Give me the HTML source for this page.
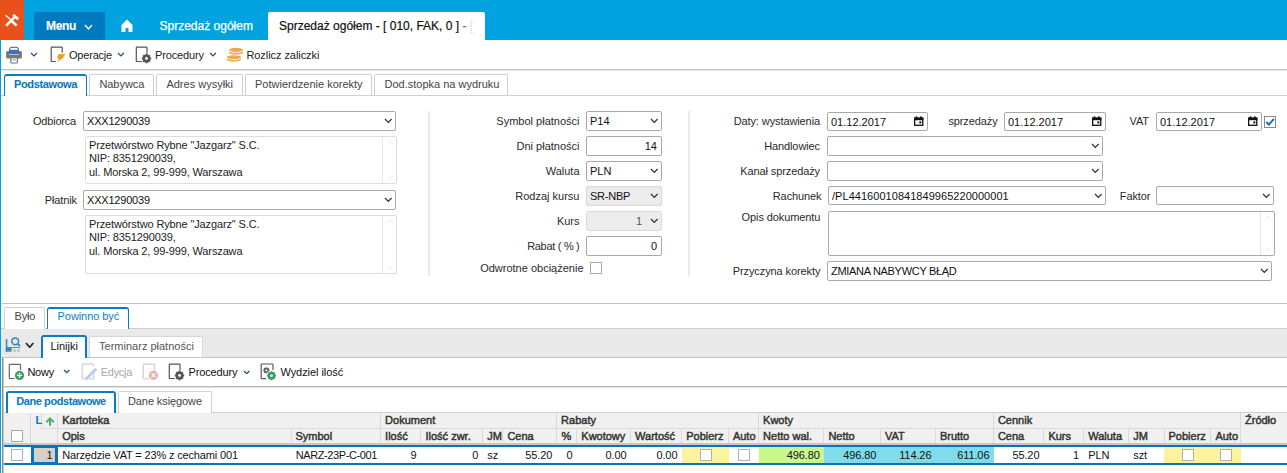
<!DOCTYPE html><html><head><meta charset="utf-8"><style>
html,body{margin:0;padding:0;width:1287px;height:473px;overflow:hidden;background:#fff;font-family:"Liberation Sans",sans-serif;}
body>div,body>svg{position:absolute;box-sizing:border-box;}
.t{white-space:nowrap;}
</style></head><body>

<div style="left:0px;top:0px;width:1287px;height:40px;background:#00a3e0"></div>
<div style="left:0px;top:0px;width:24px;height:40px;background:#e8511b"></div>
<svg style="left:0px;top:0px" width="24" height="40" viewBox="0 0 24 40"><path d="M5.6 15.2 L10.5 19.4" stroke="#fff" stroke-width="1.3"/><path d="M11.8 21 L16.6 25.6" stroke="#fff" stroke-width="2.6"/><path d="M6.2 25.6 L14.6 17.2" stroke="#fff" stroke-width="2.6"/><path d="M12.2 15.6 L14.4 13.9 L19.2 18.3 L17 20.2 Z" fill="#fff"/></svg>
<div style="left:34px;top:12px;width:71px;height:28px;background:#007abe;border-radius:2px 2px 0 0"></div>
<div class="t" style="top:17.84px;font-size:12px;line-height:16px;color:#fff;font-weight:bold;letter-spacing:-0.3px;-webkit-text-stroke:0.1px #fff;left:46px;">Menu</div>
<svg style="left:84px;top:24px" width="9" height="6" viewBox="-1 -1 9 6"><path d="M0 0 L3.5 4 L7 0" fill="none" stroke="#fff" stroke-width="1.3"/></svg>
<svg style="left:121px;top:19px" width="12" height="13" viewBox="0 0 12 13"><path d="M6 0.5 L11.5 6 L11.5 13 L7.5 13 L7.5 9 L4.5 9 L4.5 13 L0.5 13 L0.5 6 Z" fill="#fff"/></svg>
<div class="t" style="top:18.24px;font-size:12px;line-height:16px;color:#fff;-webkit-text-stroke:0.25px #fff;left:159.5px;">Sprzedaż ogółem</div>
<div style="left:268px;top:12px;width:217px;height:28px;background:#fff;border-radius:2px 2px 0 0"></div>
<div class="t" style="top:17.64px;font-size:12px;line-height:16px;color:#111;-webkit-text-stroke:0.2px #111;left:279px;">Sprzedaż ogółem - [ 010, FAK, 0 ] <span style="color:#777;-webkit-text-stroke:0.2px #777">-</span> <span style="color:#ddd;-webkit-text-stroke:0 #ddd">[</span></div>
<div style="left:0px;top:40px;width:1px;height:433px;background:#00a3e0"></div>
<svg style="left:4px;top:44px" width="20" height="20" viewBox="0 0 20 20"><rect x="5.6" y="3.4" width="8.8" height="8" rx="2" fill="#fff" stroke="#777" stroke-width="1.2"/><rect x="2.1" y="7" width="15.8" height="7.5" rx="1.6" fill="#777"/><rect x="5.1" y="5.8" width="9.8" height="4.2" fill="#3f72b8"/><rect x="5.1" y="10" width="9.8" height="1" fill="#b8c8e0"/><rect x="6.8" y="13.6" width="6.6" height="5.4" rx="0.8" fill="#fff" stroke="#777" stroke-width="1.2"/><rect x="8.2" y="15.2" width="3.8" height="1.2" fill="#8cb0dc"/></svg>
<svg style="left:29.7px;top:52.4px" width="7.9" height="4.9" viewBox="-1 -1 7.9 4.9"><path d="M0 0 L2.95 2.9 L5.9 0" fill="none" stroke="#234f8a" stroke-width="1.3"/></svg>
<svg style="left:46px;top:42px" width="22" height="24" viewBox="0 0 22 24"><path d="M16.2 10.7 V5.8 Q16.2 5.2 15.6 5.2 H5.8 Q5.2 5.2 5.2 5.8 V18.9 Q5.2 19.5 5.8 19.5 H9.9" fill="none" stroke="#555" stroke-width="1.2"/><path d="M12.6 12 H19.9 L16.8 14.6 H19 L10.3 20.8 L13.3 16.4 H10.9 Z" fill="#eba024"/></svg>
<div class="t" style="top:47.39px;font-size:11px;line-height:16px;color:#222;letter-spacing:-0.2px;left:69px;">Operacje</div>
<svg style="left:116.7px;top:52.4px" width="7.9" height="4.9" viewBox="-1 -1 7.9 4.9"><path d="M0 0 L2.95 2.9 L5.9 0" fill="none" stroke="#234f8a" stroke-width="1.3"/></svg>
<svg style="left:130px;top:42px" width="24" height="24" viewBox="0 0 24 24"><path d="M17 11.5 V5.8 Q17 5.2 16.4 5.2 H6.9 Q6.3 5.2 6.3 5.8 V18.9 Q6.3 19.5 6.9 19.5 H11.8" fill="none" stroke="#555" stroke-width="1.2"/><polygon points="19.84,15.16 21.18,15.42 21.18,17.58 19.84,17.84 19.81,17.92 20.57,19.04 19.04,20.57 17.92,19.81 17.84,19.84 17.58,21.18 15.42,21.18 15.16,19.84 15.08,19.81 13.96,20.57 12.43,19.04 13.19,17.92 13.16,17.84 11.82,17.58 11.82,15.42 13.16,15.16 13.19,15.08 12.43,13.96 13.96,12.43 15.08,13.19 15.16,13.16 15.42,11.82 17.58,11.82 17.84,13.16 17.92,13.19 19.04,12.43 20.57,13.96 19.81,15.08" fill="#555"/><circle cx="16.5" cy="16.5" r="3.6" fill="#555"/><circle cx="16.5" cy="16.5" r="1.4" fill="#fff"/></svg>
<div class="t" style="top:47.39px;font-size:11px;line-height:16px;color:#222;letter-spacing:-0.13px;left:155px;">Procedury</div>
<svg style="left:209.2px;top:52.4px" width="7.9" height="4.9" viewBox="-1 -1 7.9 4.9"><path d="M0 0 L2.95 2.9 L5.9 0" fill="none" stroke="#234f8a" stroke-width="1.3"/></svg>
<svg style="left:222px;top:42px" width="24" height="24" viewBox="0 0 24 24"><ellipse cx="14.05" cy="7.85" rx="7.1" ry="2.05" fill="#e9a94c"/><path d="M6.95 8.75 A7.1 2.05 0 0 0 21.15 8.75 V10.55 A7.1 2.05 0 0 1 6.95 10.55 Z" fill="#e9a94c"/><ellipse cx="11.95" cy="15.1" rx="7.05" ry="1.9" fill="#e9a94c"/><path d="M4.9 16 A7.05 1.9 0 0 0 19 16 V17.6 A7.05 1.9 0 0 1 4.9 17.6 Z" fill="#e9a94c"/></svg>
<div class="t" style="top:47.39px;font-size:11px;line-height:16px;color:#222;letter-spacing:-0.06px;left:246.4px;">Rozlicz zaliczki</div>
<div style="left:1px;top:69px;width:1286px;height:1px;background:#c4c4c4"></div>
<div style="left:1px;top:70px;width:1286px;height:1px;background:#e8e8e8"></div>
<div style="left:1px;top:95px;width:1286px;height:1px;background:#d0d0d0"></div>
<div style="left:4px;top:74px;width:83px;height:22px;background:#fff;border:1px solid #0a7cc1;border-bottom:none;border-top-width:2px;border-radius:3px 3px 0 0"></div>
<div class="t" style="top:75.99px;font-size:11px;line-height:16px;color:#0a74b8;font-weight:bold;letter-spacing:-0.37px;-webkit-text-stroke:0.05px #0a74b8;left:14px;">Podstawowa</div>
<div style="left:89px;top:74px;width:65px;height:21px;background:#fff;border:1px solid #cfcfcf;border-bottom:none;border-radius:2px 2px 0 0"></div>
<div class="t" style="top:75.99px;font-size:11px;line-height:16px;color:#444;letter-spacing:-0.04px;left:99.4px;">Nabywca</div>
<div style="left:156px;top:74px;width:87px;height:21px;background:#fff;border:1px solid #cfcfcf;border-bottom:none;border-radius:2px 2px 0 0"></div>
<div class="t" style="top:75.99px;font-size:11px;line-height:16px;color:#444;left:166.4px;">Adres wysyłki</div>
<div style="left:245px;top:74px;width:127px;height:21px;background:#fff;border:1px solid #cfcfcf;border-bottom:none;border-radius:2px 2px 0 0"></div>
<div class="t" style="top:75.99px;font-size:11px;line-height:16px;color:#444;left:255px;">Potwierdzenie korekty</div>
<div style="left:374px;top:74px;width:134px;height:21px;background:#fff;border:1px solid #cfcfcf;border-bottom:none;border-radius:2px 2px 0 0"></div>
<div class="t" style="top:75.99px;font-size:11px;line-height:16px;color:#444;left:384.5px;">Dod.stopka na wydruku</div>
<div class="t" style="top:113.19px;font-size:11px;line-height:16px;color:#2a2a2a;letter-spacing:-0.2px;right:1211px;">Odbiorca</div>
<div style="left:83px;top:111px;width:313px;height:20px;background:#fff;border:1px solid #a9a9a9;border-radius:2px"></div>
<div class="t" style="top:113.19px;font-size:11px;line-height:16px;color:#111;letter-spacing:-0.2px;left:87px;">XXX1290039</div>
<svg style="left:384px;top:118.3px" width="8.6" height="5.4" viewBox="-1 -1 8.6 5.4"><path d="M0 0 L3.3 3.4 L6.6 0" fill="none" stroke="#333" stroke-width="1.25"/></svg>
<div style="left:85px;top:136px;width:312px;height:48px;background:#fff;border:1px solid #dcdcdc;border-radius:2px"></div>
<div style="left:382px;top:137px;width:1px;height:46px;background:#e6e6e6"></div>
<svg style="left:386px;top:140px" width="8" height="5" viewBox="0 0 8 5"><path d="M1 4 L4 1 L7 4" fill="none" stroke="#ececec" stroke-width="1"/></svg>
<svg style="left:386px;top:175px" width="8" height="5" viewBox="0 0 8 5"><path d="M1 1 L4 4 L7 1" fill="none" stroke="#ececec" stroke-width="1"/></svg>
<div class="t" style="top:136.79px;font-size:11px;line-height:16px;color:#222;letter-spacing:-0.13px;left:89px;">Przetwórstwo Rybne "Jazgarz" S.C.</div>
<div class="t" style="top:150.29px;font-size:11px;line-height:16px;color:#222;letter-spacing:-0.13px;left:89px;">NIP: 8351290039,</div>
<div class="t" style="top:163.79px;font-size:11px;line-height:16px;color:#222;letter-spacing:-0.13px;left:89px;">ul. Morska 2, 99-999, Warszawa</div>
<div class="t" style="top:192.19px;font-size:11px;line-height:16px;color:#2a2a2a;letter-spacing:-0.1px;right:1210px;">Płatnik</div>
<div style="left:83px;top:190px;width:313px;height:20px;background:#fff;border:1px solid #a9a9a9;border-radius:2px"></div>
<div class="t" style="top:192.19px;font-size:11px;line-height:16px;color:#111;letter-spacing:-0.2px;left:87px;">XXX1290039</div>
<svg style="left:384px;top:197.3px" width="8.6" height="5.4" viewBox="-1 -1 8.6 5.4"><path d="M0 0 L3.3 3.4 L6.6 0" fill="none" stroke="#333" stroke-width="1.25"/></svg>
<div style="left:85px;top:215px;width:312px;height:59px;background:#fff;border:1px solid #dcdcdc;border-radius:2px"></div>
<div style="left:382px;top:216px;width:1px;height:57px;background:#e6e6e6"></div>
<svg style="left:386px;top:219px" width="8" height="5" viewBox="0 0 8 5"><path d="M1 4 L4 1 L7 4" fill="none" stroke="#ececec" stroke-width="1"/></svg>
<svg style="left:386px;top:265px" width="8" height="5" viewBox="0 0 8 5"><path d="M1 1 L4 4 L7 1" fill="none" stroke="#ececec" stroke-width="1"/></svg>
<div class="t" style="top:215.79px;font-size:11px;line-height:16px;color:#222;letter-spacing:-0.13px;left:89px;">Przetwórstwo Rybne "Jazgarz" S.C.</div>
<div class="t" style="top:229.29px;font-size:11px;line-height:16px;color:#222;letter-spacing:-0.13px;left:89px;">NIP: 8351290039,</div>
<div class="t" style="top:242.79px;font-size:11px;line-height:16px;color:#222;letter-spacing:-0.13px;left:89px;">ul. Morska 2, 99-999, Warszawa</div>
<div style="left:428px;top:111px;width:2px;height:165px;background:#e9e9e9"></div>
<div style="left:688px;top:111px;width:2px;height:165px;background:#e9e9e9"></div>
<div class="t" style="top:113.19px;font-size:11px;line-height:16px;color:#2a2a2a;letter-spacing:0px;right:707.5px;">Symbol płatności</div>
<div style="left:586px;top:111px;width:76px;height:20px;background:#fff;border:1px solid #a9a9a9;border-radius:2px"></div>
<div class="t" style="top:113.19px;font-size:11px;line-height:16px;color:#111;left:590px;">P14</div>
<svg style="left:650px;top:118.3px" width="8.6" height="5.4" viewBox="-1 -1 8.6 5.4"><path d="M0 0 L3.3 3.4 L6.6 0" fill="none" stroke="#333" stroke-width="1.25"/></svg>
<div class="t" style="top:138.19px;font-size:11px;line-height:16px;color:#2a2a2a;letter-spacing:0px;right:707.5px;">Dni płatności</div>
<div style="left:586px;top:136px;width:76px;height:20px;background:#fff;border:1px solid #a9a9a9;border-radius:2px"></div>
<div class="t" style="top:138.19px;font-size:11px;line-height:16px;color:#111;right:630px;">14</div>
<div class="t" style="top:163.19px;font-size:11px;line-height:16px;color:#2a2a2a;letter-spacing:0px;right:707.5px;">Waluta</div>
<div style="left:586px;top:161px;width:76px;height:20px;background:#fff;border:1px solid #a9a9a9;border-radius:2px"></div>
<div class="t" style="top:163.19px;font-size:11px;line-height:16px;color:#111;left:590px;">PLN</div>
<svg style="left:650px;top:168.3px" width="8.6" height="5.4" viewBox="-1 -1 8.6 5.4"><path d="M0 0 L3.3 3.4 L6.6 0" fill="none" stroke="#333" stroke-width="1.25"/></svg>
<div class="t" style="top:188.19px;font-size:11px;line-height:16px;color:#2a2a2a;letter-spacing:0px;right:707.5px;">Rodzaj kursu</div>
<div style="left:586px;top:186px;width:76px;height:20px;background:#ececec;border:1px solid #d9d9d9;border-radius:2px"></div>
<div class="t" style="top:188.19px;font-size:11px;line-height:16px;color:#111;letter-spacing:-0.25px;left:590px;">SR-NBP</div>
<svg style="left:650px;top:193.3px" width="8.6" height="5.4" viewBox="-1 -1 8.6 5.4"><path d="M0 0 L3.3 3.4 L6.6 0" fill="none" stroke="#333" stroke-width="1.25"/></svg>
<div class="t" style="top:213.19px;font-size:11px;line-height:16px;color:#2a2a2a;letter-spacing:0px;right:707.5px;">Kurs</div>
<div style="left:586px;top:211px;width:76px;height:20px;background:#ececec;border:1px solid #d9d9d9;border-radius:2px"></div>
<div class="t" style="top:213.19px;font-size:11px;line-height:16px;color:#555;right:645px;">1</div>
<svg style="left:650px;top:218.3px" width="8.6" height="5.4" viewBox="-1 -1 8.6 5.4"><path d="M0 0 L3.3 3.4 L6.6 0" fill="none" stroke="#333" stroke-width="1.25"/></svg>
<div class="t" style="top:238.19px;font-size:11px;line-height:16px;color:#2a2a2a;letter-spacing:-0.3px;right:707.5px;">Rabat ( % )</div>
<div style="left:586px;top:236px;width:76px;height:20px;background:#fff;border:1px solid #a9a9a9;border-radius:2px"></div>
<div class="t" style="top:238.19px;font-size:11px;line-height:16px;color:#111;right:630px;">0</div>
<div class="t" style="top:259.79px;font-size:11px;line-height:16px;color:#2a2a2a;letter-spacing:0px;right:703.5px;">Odwrotne obciążenie</div>
<div style="left:590px;top:262px;width:12px;height:12px;background:#fff;border:1px solid #a8a8a8"></div>
<div class="t" style="top:113.19px;font-size:11px;line-height:16px;color:#2a2a2a;letter-spacing:-0.1px;right:467px;">Daty: wystawienia</div>
<div style="left:827px;top:112px;width:101px;height:19px;background:#fff;border:1px solid #a9a9a9;border-radius:2px"></div>
<div class="t" style="top:114.19px;font-size:11px;line-height:16px;color:#111;left:831px;">01.12.2017</div>
<svg style="left:914.2px;top:116.2px" width="10" height="10" viewBox="0 0 10 10"><rect x="0.65" y="2.2" width="8.1" height="7.1" fill="none" stroke="#111" stroke-width="1.3"/><rect x="0" y="1.6" width="9.4" height="2.6" fill="#111"/><rect x="1.7" y="0.4" width="1.6" height="2" fill="#111"/><rect x="6.1" y="0.4" width="1.6" height="2" fill="#111"/><rect x="5.3" y="5.4" width="2" height="2" fill="#111"/></svg>
<div class="t" style="top:113.19px;font-size:11px;line-height:16px;color:#2a2a2a;letter-spacing:-0.1px;right:289.4px;">sprzedaży</div>
<div style="left:1004px;top:112px;width:102px;height:19px;background:#fff;border:1px solid #a9a9a9;border-radius:2px"></div>
<div class="t" style="top:114.19px;font-size:11px;line-height:16px;color:#111;left:1008px;">01.12.2017</div>
<svg style="left:1092.2px;top:116.2px" width="10" height="10" viewBox="0 0 10 10"><rect x="0.65" y="2.2" width="8.1" height="7.1" fill="none" stroke="#111" stroke-width="1.3"/><rect x="0" y="1.6" width="9.4" height="2.6" fill="#111"/><rect x="1.7" y="0.4" width="1.6" height="2" fill="#111"/><rect x="6.1" y="0.4" width="1.6" height="2" fill="#111"/><rect x="5.3" y="5.4" width="2" height="2" fill="#111"/></svg>
<div class="t" style="top:113.19px;font-size:11px;line-height:16px;color:#2a2a2a;letter-spacing:-0.1px;right:138px;">VAT</div>
<div style="left:1156px;top:112px;width:106px;height:19px;background:#fff;border:1px solid #a9a9a9;border-radius:2px"></div>
<div class="t" style="top:114.19px;font-size:11px;line-height:16px;color:#111;left:1160px;">01.12.2017</div>
<svg style="left:1248.2px;top:116.2px" width="10" height="10" viewBox="0 0 10 10"><rect x="0.65" y="2.2" width="8.1" height="7.1" fill="none" stroke="#111" stroke-width="1.3"/><rect x="0" y="1.6" width="9.4" height="2.6" fill="#111"/><rect x="1.7" y="0.4" width="1.6" height="2" fill="#111"/><rect x="6.1" y="0.4" width="1.6" height="2" fill="#111"/><rect x="5.3" y="5.4" width="2" height="2" fill="#111"/></svg>
<div style="left:1264px;top:116px;width:12px;height:12px;background:#fff;border:1px solid #888"></div>
<svg style="left:1265px;top:117px" width="10" height="10" viewBox="0 0 10 10"><path d="M1.3 5 L3.9 7.6 L8.9 1.8" fill="none" stroke="#1e5fa8" stroke-width="1.8"/></svg>
<div class="t" style="top:138.19px;font-size:11px;line-height:16px;color:#2a2a2a;letter-spacing:-0.1px;right:467px;">Handlowiec</div>
<div style="left:827px;top:136px;width:276px;height:20px;background:#fff;border:1px solid #a9a9a9;border-radius:2px"></div>
<svg style="left:1091px;top:143.3px" width="8.6" height="5.4" viewBox="-1 -1 8.6 5.4"><path d="M0 0 L3.3 3.4 L6.6 0" fill="none" stroke="#333" stroke-width="1.25"/></svg>
<div class="t" style="top:163.19px;font-size:11px;line-height:16px;color:#2a2a2a;letter-spacing:-0.1px;right:467px;">Kanał sprzedaży</div>
<div style="left:827px;top:161px;width:276px;height:20px;background:#fff;border:1px solid #a9a9a9;border-radius:2px"></div>
<svg style="left:1091px;top:168.3px" width="8.6" height="5.4" viewBox="-1 -1 8.6 5.4"><path d="M0 0 L3.3 3.4 L6.6 0" fill="none" stroke="#333" stroke-width="1.25"/></svg>
<div class="t" style="top:188.19px;font-size:11px;line-height:16px;color:#2a2a2a;letter-spacing:-0.1px;right:465.5px;">Rachunek</div>
<div style="left:828px;top:186px;width:278px;height:19px;background:#fff;border:1px solid #a9a9a9;border-radius:2px"></div>
<div class="t" style="top:188.19px;font-size:11px;line-height:16px;color:#111;letter-spacing:0.04px;left:832px;">/PL44160010841849965220000001</div>
<svg style="left:1094px;top:193.3px" width="8.6" height="5.4" viewBox="-1 -1 8.6 5.4"><path d="M0 0 L3.3 3.4 L6.6 0" fill="none" stroke="#333" stroke-width="1.25"/></svg>
<div class="t" style="top:188.19px;font-size:11px;line-height:16px;color:#2a2a2a;letter-spacing:-0.1px;right:136.5999999999999px;">Faktor</div>
<div style="left:1156px;top:186px;width:118px;height:19px;background:#fff;border:1px solid #a9a9a9;border-radius:2px"></div>
<svg style="left:1262px;top:193.3px" width="8.6" height="5.4" viewBox="-1 -1 8.6 5.4"><path d="M0 0 L3.3 3.4 L6.6 0" fill="none" stroke="#333" stroke-width="1.25"/></svg>
<div class="t" style="top:209.19px;font-size:11px;line-height:16px;color:#2a2a2a;letter-spacing:-0.1px;right:466.70000000000005px;">Opis dokumentu</div>
<div style="left:828px;top:211px;width:447px;height:45px;background:#fff;border:1px solid #a9a9a9;border-radius:2px"></div>
<div style="left:1260px;top:212px;width:1px;height:43px;background:#e6e6e6"></div>
<svg style="left:1264px;top:215px" width="8" height="5" viewBox="0 0 8 5"><path d="M1 4 L4 1 L7 4" fill="none" stroke="#ececec" stroke-width="1"/></svg>
<svg style="left:1264px;top:247px" width="8" height="5" viewBox="0 0 8 5"><path d="M1 1 L4 4 L7 1" fill="none" stroke="#ececec" stroke-width="1"/></svg>
<div class="t" style="top:263.19px;font-size:11px;line-height:16px;color:#2a2a2a;letter-spacing:-0.1px;right:466.70000000000005px;">Przyczyna korekty</div>
<div style="left:827px;top:261px;width:445px;height:20px;background:#fff;border:1px solid #a9a9a9;border-radius:2px"></div>
<div class="t" style="top:263.19px;font-size:11px;line-height:16px;color:#111;letter-spacing:-0.3px;left:831px;">ZMIANA NABYWCY BŁĄD</div>
<svg style="left:1260px;top:268.3px" width="8.6" height="5.4" viewBox="-1 -1 8.6 5.4"><path d="M0 0 L3.3 3.4 L6.6 0" fill="none" stroke="#333" stroke-width="1.25"/></svg>
<div style="left:2px;top:303px;width:1285px;height:1px;background:#c2c2c2"></div>
<div style="left:1px;top:328px;width:1286px;height:1px;background:#cfcfcf"></div>
<div style="left:4px;top:307px;width:41px;height:22px;background:#fff;border:1px solid #cfcfcf;border-bottom:none;border-radius:2px 2px 0 0"></div>
<div class="t" style="top:307.99px;font-size:11px;line-height:16px;color:#444;letter-spacing:-0.2px;left:14.5px;">Było</div>
<div style="left:47px;top:307px;width:82px;height:23px;background:#fff;border:1px solid #0a7cc1;border-bottom:none;border-top-width:2px;border-radius:3px 3px 0 0"></div>
<div class="t" style="top:307.99px;font-size:11px;line-height:16px;color:#0a7cc1;letter-spacing:-0.08px;left:57.6px;">Powinno być</div>
<div style="left:1px;top:329px;width:1286px;height:28px;background:#e9e9e9"></div>
<div style="left:2px;top:357px;width:1px;height:116px;background:#8f8f8f"></div>
<div style="left:3px;top:357px;width:1px;height:116px;background:#c4c4c4"></div>
<div style="left:1px;top:357px;width:1286px;height:1px;background:#c4c4c4"></div>
<svg style="left:0px;top:330px" width="24" height="26" viewBox="0 330 24 26"><rect x="5.8" y="339" width="1.5" height="12.6" fill="#3d7fc9"/><rect x="5.8" y="348" width="5.8" height="3.6" fill="#3d7fc9"/><rect x="7" y="347" width="13" height="0.9" fill="#3d7fc9"/><circle cx="15.2" cy="341.3" r="3.4" fill="none" stroke="#3d7fc9" stroke-width="1.5"/><path d="M17.5 343.6 L20 346.1" stroke="#3d7fc9" stroke-width="1.9"/><rect x="13.2" y="349.3" width="2.7" height="2.5" fill="#c4c4c4"/><rect x="17" y="349.3" width="2.9" height="2.5" fill="#c4c4c4"/></svg>
<svg style="left:25.3px;top:342.2px" width="9.4" height="6.2" viewBox="-1 -1 9.4 6.2"><path d="M0 0 L3.7 4.2 L7.4 0" fill="none" stroke="#222" stroke-width="1.7"/></svg>
<div style="left:41px;top:335px;width:46px;height:23px;background:#fff;border:2px solid #0a7cc1;border-bottom:none;border-radius:3px 3px 0 0"></div>
<div class="t" style="top:338.19px;font-size:11px;line-height:16px;color:#111;left:50.4px;">Linijki</div>
<div style="left:89px;top:335.5px;width:114px;height:21.5px;background:#fff;border:1px solid #d8d8d8;border-bottom:none;border-radius:2px 2px 0 0"></div>
<div class="t" style="top:338.19px;font-size:11px;line-height:16px;color:#555;left:99.1px;">Terminarz płatności</div>
<svg style="left:0px;top:355px" width="40" height="32" viewBox="0 355 40 32"><path d="M20.5 369.9 V364.90000000000003 Q20.5 364.3 19.9 364.3 H9.9 Q9.3 364.3 9.3 364.90000000000003 V377.9 Q9.3 378.5 9.9 378.5 H14.7" fill="none" stroke="#666" stroke-width="1.2"/><circle cx="19.5" cy="375.4" r="4.6" fill="#3f9c6a"/><path d="M19.5 372.8 V378 M16.9 375.4 H22.1" stroke="#fff" stroke-width="1.4"/></svg>
<div class="t" style="top:364.09px;font-size:11px;line-height:16px;color:#111;letter-spacing:-0.22px;left:27.4px;">Nowy</div>
<svg style="left:62.5px;top:369.4px" width="7.4" height="4.7" viewBox="-1 -1 7.4 4.7"><path d="M0 0 L2.7 2.7 L5.4 0" fill="none" stroke="#234f8a" stroke-width="1.3"/></svg>
<svg style="left:78px;top:355px" width="24" height="32" viewBox="78 355 24 32"><path d="M93.7 366.5 V364.8 Q93.7 364.2 93.10000000000001 364.2 H82.8 Q82.2 364.2 82.2 364.8 V378.29999999999995 Q82.2 378.9 82.8 378.9 H84.5" fill="none" stroke="#cfcfcf" stroke-width="1.2"/><path d="M93.7 372 V378.9 H89" fill="none" stroke="#cfcfcf" stroke-width="1.2"/><path d="M85.6 379.5 L96.3 368.8" stroke="#b9cde6" stroke-width="3"/></svg>
<div class="t" style="top:364.09px;font-size:11px;line-height:16px;color:#a8a8a8;letter-spacing:-0.3px;left:100.8px;">Edycja</div>
<svg style="left:138px;top:355px" width="24" height="32" viewBox="138 355 24 32"><path d="M154.7 370.8 V364.8 Q154.7 364.2 154.1 364.2 H143.9 Q143.3 364.2 143.3 364.8 V378.29999999999995 Q143.3 378.9 143.9 378.9 H148.8" fill="none" stroke="#d0d0d0" stroke-width="1.2"/><circle cx="153.4" cy="375.3" r="4.6" fill="#ebb5ab"/><path d="M151.6 373.5 L155.2 377.1 M155.2 373.5 L151.6 377.1" stroke="#fff" stroke-width="1.2"/></svg>
<svg style="left:163px;top:358.5px" width="24" height="24" viewBox="0 0 24 24"><path d="M17 11.5 V5.8 Q17 5.2 16.4 5.2 H6.9 Q6.3 5.2 6.3 5.8 V18.9 Q6.3 19.5 6.9 19.5 H11.8" fill="none" stroke="#555" stroke-width="1.2"/><polygon points="19.84,15.16 21.18,15.42 21.18,17.58 19.84,17.84 19.81,17.92 20.57,19.04 19.04,20.57 17.92,19.81 17.84,19.84 17.58,21.18 15.42,21.18 15.16,19.84 15.08,19.81 13.96,20.57 12.43,19.04 13.19,17.92 13.16,17.84 11.82,17.58 11.82,15.42 13.16,15.16 13.19,15.08 12.43,13.96 13.96,12.43 15.08,13.19 15.16,13.16 15.42,11.82 17.58,11.82 17.84,13.16 17.92,13.19 19.04,12.43 20.57,13.96 19.81,15.08" fill="#555"/><circle cx="16.5" cy="16.5" r="3.6" fill="#555"/><circle cx="16.5" cy="16.5" r="1.4" fill="#fff"/></svg>
<div class="t" style="top:363.89px;font-size:11px;line-height:16px;color:#111;letter-spacing:-0.13px;left:188.5px;">Procedury</div>
<svg style="left:243px;top:369.6px" width="7.4" height="4.7" viewBox="-1 -1 7.4 4.7"><path d="M0 0 L2.7 2.7 L5.4 0" fill="none" stroke="#234f8a" stroke-width="1.3"/></svg>
<svg style="left:256px;top:355px" width="24" height="32" viewBox="256 355 24 32"><path d="M273 370 V364.6 Q273 364 272.4 364 H261.8 Q261.2 364 261.2 364.6 V378.09999999999997 Q261.2 378.7 261.8 378.7 H266" fill="none" stroke="#555" stroke-width="1.2"/><circle cx="271.5" cy="375.7" r="5.6" fill="#fff"/><polygon points="268.63,369.51 269.61,369.65 269.61,371.15 268.63,371.29 268.61,371.35 269.20,372.15 268.15,373.20 267.35,372.61 267.29,372.63 267.15,373.61 265.65,373.61 265.51,372.63 265.45,372.61 264.65,373.20 263.60,372.15 264.19,371.35 264.17,371.29 263.19,371.15 263.19,369.65 264.17,369.51 264.19,369.45 263.60,368.65 264.65,367.60 265.45,368.19 265.51,368.17 265.65,367.19 267.15,367.19 267.29,368.17 267.35,368.19 268.15,367.60 269.20,368.65 268.61,369.45" fill="#666"/><circle cx="266.4" cy="370.4" r="2.4" fill="#666"/><circle cx="266.4" cy="370.4" r="0.9" fill="#fff"/><circle cx="271.5" cy="375.7" r="5.3" fill="#fff"/><polygon points="274.66,374.44 275.98,374.66 275.98,376.74 274.66,376.96 274.62,377.04 275.40,378.13 273.93,379.60 272.84,378.82 272.76,378.86 272.54,380.18 270.46,380.18 270.24,378.86 270.16,378.82 269.07,379.60 267.60,378.13 268.38,377.04 268.34,376.96 267.02,376.74 267.02,374.66 268.34,374.44 268.38,374.36 267.60,373.27 269.07,371.80 270.16,372.58 270.24,372.54 270.46,371.22 272.54,371.22 272.76,372.54 272.84,372.58 273.93,371.80 275.40,373.27 274.62,374.36" fill="#3f9c6a"/><circle cx="271.5" cy="375.7" r="3.4" fill="#3f9c6a"/><circle cx="271.5" cy="375.7" r="1.3" fill="#fff"/></svg>
<div class="t" style="top:363.89px;font-size:11px;line-height:16px;color:#111;letter-spacing:-0.05px;left:280.4px;">Wydziel ilość</div>
<div style="left:4px;top:386px;width:1283px;height:1px;background:#b9b9b9"></div>
<div style="left:4px;top:387px;width:1283px;height:1px;background:#e2e2e2"></div>
<div style="left:4px;top:412px;width:1283px;height:1px;background:#d0d0d0"></div>
<div style="left:6px;top:391px;width:110px;height:22px;background:#fff;border:2px solid #0a7cc1;border-bottom:none;border-radius:3px 3px 0 0"></div>
<div class="t" style="top:392.69px;font-size:11px;line-height:16px;color:#0b78bd;font-weight:bold;letter-spacing:-0.43px;-webkit-text-stroke:0.05px #0b78bd;left:16.3px;">Dane podstawowe</div>
<div style="left:118px;top:391px;width:94px;height:22px;background:#fff;border:1px solid #d0d0d0;border-bottom:none;border-radius:2px 2px 0 0"></div>
<div class="t" style="top:393.19px;font-size:11px;line-height:16px;color:#444;letter-spacing:-0.1px;left:128px;">Dane księgowe</div>
<div style="left:4px;top:413px;width:1283px;height:30px;background:#f0f0f0"></div>
<div style="left:4px;top:443px;width:1283px;height:2px;background:#c8c8c8"></div>
<div style="left:30px;top:413px;width:1px;height:30px;background:#d9d9d9"></div>
<div style="left:57px;top:413px;width:1px;height:30px;background:#d9d9d9"></div>
<div style="left:380px;top:413px;width:1px;height:30px;background:#d9d9d9"></div>
<div style="left:556px;top:413px;width:1px;height:30px;background:#d9d9d9"></div>
<div style="left:758px;top:413px;width:1px;height:30px;background:#d9d9d9"></div>
<div style="left:993px;top:413px;width:1px;height:30px;background:#d9d9d9"></div>
<div style="left:1240px;top:413px;width:1px;height:30px;background:#d9d9d9"></div>
<div style="left:291px;top:428px;width:1px;height:15px;background:#d9d9d9"></div>
<div style="left:420px;top:428px;width:1px;height:15px;background:#d9d9d9"></div>
<div style="left:482px;top:428px;width:1px;height:15px;background:#d9d9d9"></div>
<div style="left:502px;top:428px;width:1px;height:15px;background:#d9d9d9"></div>
<div style="left:576px;top:428px;width:1px;height:15px;background:#d9d9d9"></div>
<div style="left:630px;top:428px;width:1px;height:15px;background:#d9d9d9"></div>
<div style="left:681px;top:428px;width:1px;height:15px;background:#d9d9d9"></div>
<div style="left:728px;top:428px;width:1px;height:15px;background:#d9d9d9"></div>
<div style="left:823px;top:428px;width:1px;height:15px;background:#d9d9d9"></div>
<div style="left:880px;top:428px;width:1px;height:15px;background:#d9d9d9"></div>
<div style="left:935px;top:428px;width:1px;height:15px;background:#d9d9d9"></div>
<div style="left:1043px;top:428px;width:1px;height:15px;background:#d9d9d9"></div>
<div style="left:1083px;top:428px;width:1px;height:15px;background:#d9d9d9"></div>
<div style="left:1128px;top:428px;width:1px;height:15px;background:#d9d9d9"></div>
<div style="left:1164px;top:428px;width:1px;height:15px;background:#d9d9d9"></div>
<div style="left:1210px;top:428px;width:1px;height:15px;background:#d9d9d9"></div>
<div style="left:41px;top:413px;width:1px;height:16px;background:#d9d9d9"></div>
<div style="left:41px;top:428px;width:1200px;height:1px;background:#d9d9d9"></div>
<div class="t" style="top:411.69px;font-size:11px;line-height:16px;color:#0a7cc1;font-weight:bold;-webkit-text-stroke:0.1px #0a7cc1;left:35.4px;">L</div>
<svg style="left:45px;top:417px" width="10" height="9" viewBox="0 0 10 9"><path d="M5 8.8 V1.8 M1.3 5.2 L5 1.5 L8.7 5.2" fill="none" stroke="#4caf6a" stroke-width="2"/></svg>
<div style="left:11px;top:430px;width:12px;height:12px;background:#fff;border:1px solid #a8a8a8"></div>
<div class="t" style="top:411.69px;font-size:11px;line-height:16px;color:#333;letter-spacing:0px;-webkit-text-stroke:0.45px #333;left:62.2px;">Kartoteka</div>
<div class="t" style="top:411.69px;font-size:11px;line-height:16px;color:#333;letter-spacing:0px;-webkit-text-stroke:0.45px #333;left:385.1px;">Dokument</div>
<div class="t" style="top:411.69px;font-size:11px;line-height:16px;color:#333;letter-spacing:0px;-webkit-text-stroke:0.45px #333;left:561.1px;">Rabaty</div>
<div class="t" style="top:411.69px;font-size:11px;line-height:16px;color:#333;letter-spacing:0px;-webkit-text-stroke:0.45px #333;left:763.1px;">Kwoty</div>
<div class="t" style="top:411.69px;font-size:11px;line-height:16px;color:#333;letter-spacing:0px;-webkit-text-stroke:0.45px #333;left:997.9px;">Cennik</div>
<div class="t" style="top:411.69px;font-size:11px;line-height:16px;color:#333;letter-spacing:0px;-webkit-text-stroke:0.45px #333;left:1245px;">Źródło</div>
<div class="t" style="top:427.69px;font-size:11px;line-height:16px;color:#333;letter-spacing:0px;-webkit-text-stroke:0.45px #333;left:62.2px;">Opis</div>
<div class="t" style="top:427.69px;font-size:11px;line-height:16px;color:#333;letter-spacing:0px;-webkit-text-stroke:0.45px #333;left:295.4px;">Symbol</div>
<div class="t" style="top:427.69px;font-size:11px;line-height:16px;color:#333;letter-spacing:0px;-webkit-text-stroke:0.45px #333;left:385.1px;">Ilość</div>
<div class="t" style="top:427.69px;font-size:11px;line-height:16px;color:#333;letter-spacing:0px;-webkit-text-stroke:0.45px #333;left:425.5px;">Ilość zwr.</div>
<div class="t" style="top:427.69px;font-size:11px;line-height:16px;color:#333;letter-spacing:0px;-webkit-text-stroke:0.45px #333;left:487.2px;">JM</div>
<div class="t" style="top:427.69px;font-size:11px;line-height:16px;color:#333;letter-spacing:0px;-webkit-text-stroke:0.45px #333;left:507.4px;">Cena</div>
<div class="t" style="top:427.69px;font-size:11px;line-height:16px;color:#333;letter-spacing:0px;-webkit-text-stroke:0.45px #333;left:561.5px;">%</div>
<div class="t" style="top:427.69px;font-size:11px;line-height:16px;color:#333;letter-spacing:0px;-webkit-text-stroke:0.45px #333;left:581.3px;">Kwotowy</div>
<div class="t" style="top:427.69px;font-size:11px;line-height:16px;color:#333;letter-spacing:0px;-webkit-text-stroke:0.45px #333;left:635.1px;">Wartość</div>
<div class="t" style="top:427.69px;font-size:11px;line-height:16px;color:#333;letter-spacing:0px;-webkit-text-stroke:0.45px #333;left:686.2px;">Pobierz</div>
<div class="t" style="top:427.69px;font-size:11px;line-height:16px;color:#333;letter-spacing:0px;-webkit-text-stroke:0.45px #333;left:732.9px;">Auto</div>
<div class="t" style="top:427.69px;font-size:11px;line-height:16px;color:#333;letter-spacing:0px;-webkit-text-stroke:0.45px #333;left:763.1px;">Netto wal.</div>
<div class="t" style="top:427.69px;font-size:11px;line-height:16px;color:#333;letter-spacing:0px;-webkit-text-stroke:0.45px #333;left:828.4px;">Netto</div>
<div class="t" style="top:427.69px;font-size:11px;line-height:16px;color:#333;letter-spacing:0px;-webkit-text-stroke:0.45px #333;left:885px;">VAT</div>
<div class="t" style="top:427.69px;font-size:11px;line-height:16px;color:#333;letter-spacing:0px;-webkit-text-stroke:0.45px #333;left:939.9px;">Brutto</div>
<div class="t" style="top:427.69px;font-size:11px;line-height:16px;color:#333;letter-spacing:0px;-webkit-text-stroke:0.45px #333;left:997.9px;">Cena</div>
<div class="t" style="top:427.69px;font-size:11px;line-height:16px;color:#333;letter-spacing:0px;-webkit-text-stroke:0.45px #333;left:1048.4px;">Kurs</div>
<div class="t" style="top:427.69px;font-size:11px;line-height:16px;color:#333;letter-spacing:0px;-webkit-text-stroke:0.45px #333;left:1088.2px;">Waluta</div>
<div class="t" style="top:427.69px;font-size:11px;line-height:16px;color:#333;letter-spacing:0px;-webkit-text-stroke:0.45px #333;left:1133.3px;">JM</div>
<div class="t" style="top:427.69px;font-size:11px;line-height:16px;color:#333;letter-spacing:0px;-webkit-text-stroke:0.45px #333;left:1168.5px;">Pobierz</div>
<div class="t" style="top:427.69px;font-size:11px;line-height:16px;color:#333;letter-spacing:0px;-webkit-text-stroke:0.45px #333;left:1215.4px;">Auto</div>
<div style="left:4px;top:445px;width:1283px;height:2px;background:#0a74b8"></div>
<div style="left:4px;top:463px;width:1283px;height:2px;background:#0a74b8"></div>
<div style="left:682px;top:447px;width:47px;height:16px;background:#fff29e"></div>
<div style="left:1164px;top:447px;width:77px;height:16px;background:#fff29e"></div>
<div style="left:759px;top:447px;width:65px;height:16px;background:#c9f78c"></div>
<div style="left:824px;top:447px;width:170px;height:16px;background:#80dcea"></div>
<div style="left:31px;top:447px;width:27px;height:16px;background:#0a74b8"></div>
<div style="left:34px;top:448px;width:21px;height:14px;background:#d6d0c8"></div>
<div style="left:11px;top:449px;width:12px;height:12px;background:#fff;border:1px solid #b0b0b0"></div>
<div style="left:700px;top:449px;width:12px;height:12px;background:#fff;border:1px solid #b0b0b0"></div>
<div style="left:738px;top:449px;width:12px;height:12px;background:#fff;border:1px solid #b0b0b0"></div>
<div style="left:1182px;top:449px;width:12px;height:12px;background:#fff;border:1px solid #b0b0b0"></div>
<div style="left:1220px;top:449px;width:12px;height:12px;background:#fff;border:1px solid #b0b0b0"></div>
<div class="t" style="top:446.69px;font-size:11px;line-height:16px;color:#111;letter-spacing:-0.1px;right:1234.5px;">1</div>
<div class="t" style="top:446.69px;font-size:11px;line-height:16px;color:#111;letter-spacing:-0.15px;left:62.2px;">Narzędzie VAT = 23% z cechami 001</div>
<div class="t" style="top:446.69px;font-size:11px;line-height:16px;color:#111;letter-spacing:-0.4px;left:295.7px;">NARZ-23P-C-001</div>
<div class="t" style="top:446.69px;font-size:11px;line-height:16px;color:#111;letter-spacing:-0.1px;right:870.4px;">9</div>
<div class="t" style="top:446.69px;font-size:11px;line-height:16px;color:#111;letter-spacing:-0.1px;right:808.7px;">0</div>
<div class="t" style="left:487.2px;top:446.69px;width:11px;overflow:hidden;font-size:11px;line-height:16px;color:#111">szt</div>
<div class="t" style="top:446.69px;font-size:11px;line-height:16px;color:#111;letter-spacing:-0.1px;right:734.8px;">55.20</div>
<div class="t" style="top:446.69px;font-size:11px;line-height:16px;color:#111;letter-spacing:-0.1px;right:714.4px;">0</div>
<div class="t" style="top:446.69px;font-size:11px;line-height:16px;color:#111;letter-spacing:-0.1px;right:660.4px;">0.00</div>
<div class="t" style="top:446.69px;font-size:11px;line-height:16px;color:#111;letter-spacing:-0.1px;right:609.6px;">0.00</div>
<div class="t" style="top:446.69px;font-size:11px;line-height:16px;color:#111;letter-spacing:-0.1px;right:467.29999999999995px;">496.80</div>
<div class="t" style="top:446.69px;font-size:11px;line-height:16px;color:#111;letter-spacing:-0.1px;right:410.70000000000005px;">496.80</div>
<div class="t" style="top:446.69px;font-size:11px;line-height:16px;color:#111;letter-spacing:-0.1px;right:355.6px;">114.26</div>
<div class="t" style="top:446.69px;font-size:11px;line-height:16px;color:#111;letter-spacing:-0.1px;right:297.6px;">611.06</div>
<div class="t" style="top:446.69px;font-size:11px;line-height:16px;color:#111;letter-spacing:-0.1px;right:247.5999999999999px;">55.20</div>
<div class="t" style="top:446.69px;font-size:11px;line-height:16px;color:#111;letter-spacing:-0.1px;right:208.0999999999999px;">1</div>
<div class="t" style="top:446.69px;font-size:11px;line-height:16px;color:#111;letter-spacing:-0.1px;left:1088.2px;">PLN</div>
<div class="t" style="top:446.69px;font-size:11px;line-height:16px;color:#111;letter-spacing:-0.1px;left:1133.3px;">szt</div>
</body></html>
